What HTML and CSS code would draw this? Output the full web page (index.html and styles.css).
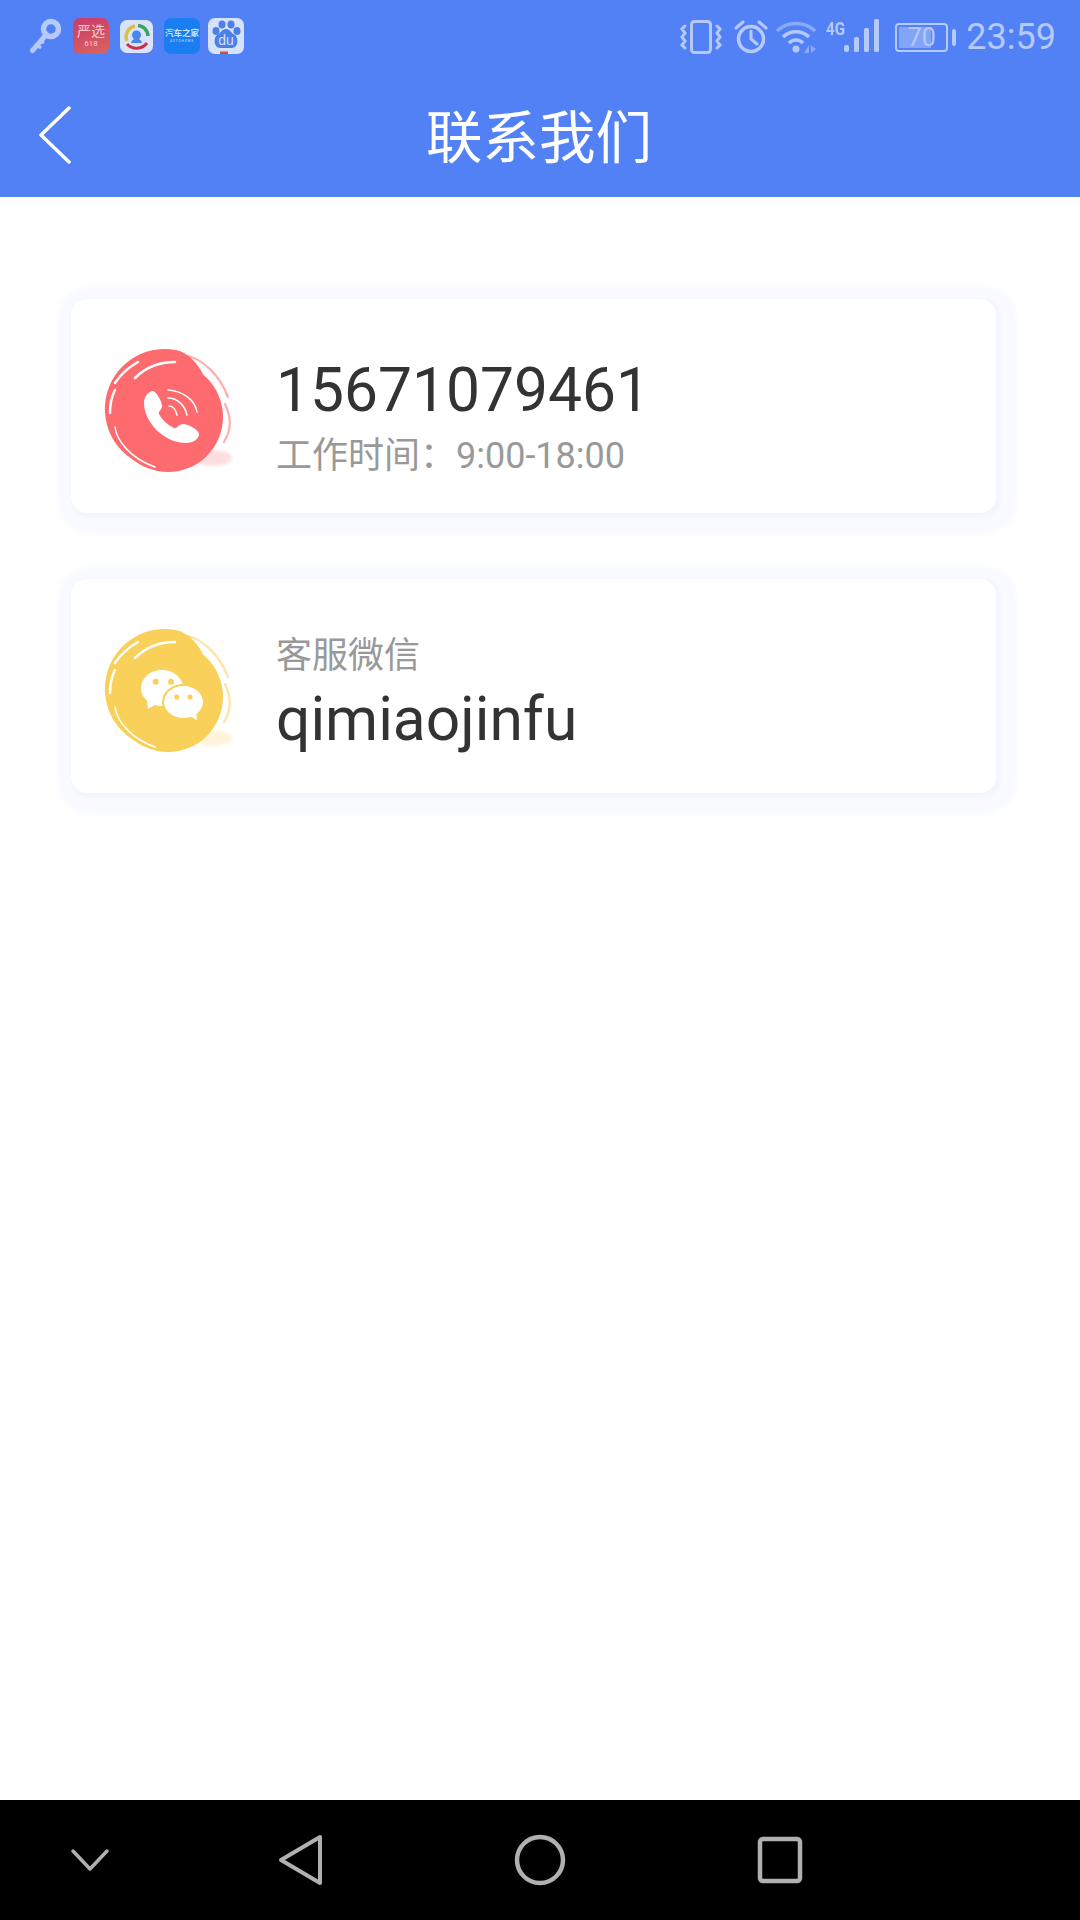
FILE: index.html
```html
<!DOCTYPE html>
<html lang="zh-CN">
<head>
  <meta charset="UTF-8">
  <title>联系我们</title>
  <link rel="stylesheet" href="styles.css">
</head>
<body>
  <div class="screen">
    <header class="top">
      <div class="status">
        <div class="status-left">
          <svg class="key" viewBox="0 0 32 36"><circle cx="21" cy="11" r="7.500" fill="none" stroke="currentColor" stroke-width="5.500"/><path d="M16 17 2.500 32.500" stroke="currentColor" stroke-width="5" stroke-linecap="round"/><path d="M7 27l4 3M11 23l3 2" stroke="currentColor" stroke-width="3"/></svg>
          <div class="app app-yanxuan"><span class="yx-name">严选</span><span class="yx-num">618</span></div>
          <div class="app app-news">
            <svg viewBox="0 0 33 33"><path d="M7 21A11 11 0 0 1 15 6" fill="none" stroke="#d9c23c" stroke-width="3.500"/><path d="M18 5.500A11 11 0 0 1 28 16" fill="none" stroke="#3aa45a" stroke-width="3.500"/><path d="M7 24A13 13 0 0 0 27 23" fill="none" stroke="#c9304a" stroke-width="3"/><circle cx="16.500" cy="15" r="4.500" fill="#4a86e8"/><path d="M11 23c1-6 10-6 11 0z" fill="#4a86e8"/></svg>
          </div>
          <div class="app app-autohome"><span class="ah-name">汽车之家</span><span class="ah-sub">AUTOHOME</span></div>
          <div class="app app-baidu">
            <svg viewBox="0 0 36 36"><ellipse cx="8" cy="13" rx="3.500" ry="4" fill="#4c7fe8"/><ellipse cx="14" cy="6.500" rx="3.500" ry="4" fill="#4c7fe8"/><ellipse cx="23" cy="6.500" rx="3.500" ry="4" fill="#4c7fe8"/><ellipse cx="29" cy="13" rx="3.500" ry="4" fill="#4c7fe8"/><path d="M18 11c4 0 5 4 9 6 4 3 3 13-3 13H12c-6 0-7-10-3-13 4-2 5-6 9-6z" fill="#4c7fe8"/><text x="18" y="27" class="du">du</text><rect x="12" y="33.500" width="8" height="2.500" fill="#e0483e"/></svg>
          </div>
        </div>
        <div class="status-right">
          <svg class="ico-vibrate" viewBox="0 0 42 34"><rect x="11.500" y="1.500" width="19" height="31" rx="3" fill="none" stroke="currentColor" stroke-width="3"/><path d="M5 6 2 9l3 4-3 4 3 4-3 4 3 3M37 6l3 3-3 4 3 4-3 4 3 4-3 3" fill="none" stroke="currentColor" stroke-width="3" stroke-linecap="round"/></svg>
          <svg class="ico-alarm" viewBox="0 0 34 34"><circle cx="17" cy="19" r="12.500" fill="none" stroke="currentColor" stroke-width="3.500"/><path d="M17 11v8l6 5M2 8l7-6M32 8l-7-6" fill="none" stroke="currentColor" stroke-width="3" stroke-linecap="round"/></svg>
          <svg class="ico-wifi" viewBox="0 0 40 34"><path d="M1 11C11 1 29 1 39 11" fill="none" stroke="#8aa9f8" stroke-width="3.500"/><path d="M7 17C14 10 26 10 33 17M13 23c4-4 10-4 14 0" fill="none" stroke="currentColor" stroke-width="3.500"/><circle cx="20" cy="29" r="3.500" fill="currentColor"/><path d="M33 25v8h-5zM35 25l5 4-5 4z" fill="#8aa9f8"/></svg>
          <div class="signal">
            <span class="net">4G</span>
            <svg viewBox="0 0 36 34"><rect x="0" y="26" width="5" height="7" rx="2" fill="currentColor"/><rect x="10" y="18" width="5" height="15" rx="1.500" fill="currentColor"/><rect x="20" y="9" width="5" height="24" rx="1.500" fill="currentColor"/><rect x="30" y="0" width="5" height="33" rx="1.500" fill="currentColor"/></svg>
          </div>
          <div class="battery">
            <div class="battery-box"><div class="battery-fill" style="width:70%"></div><span class="battery-num">70</span></div>
            <div class="battery-tip"></div>
          </div>
          <span class="clock">23:59</span>
        </div>
      </div>
      <div class="titlebar">
        <svg class="back" viewBox="0 0 34 58"><path d="M31 2 3 29l28 27" fill="none" stroke="#fff" stroke-width="3.500" stroke-linecap="round" stroke-linejoin="round"/></svg>
        <h1 class="title">联系我们</h1>
      </div>
    </header>

    <main class="content">
      <section class="card">
        <svg class="badge badge-red" viewBox="0 0 134 130">
          <use href="#brush"/>
          <path d="M44 57C44 50 49 45 53 45 57 46 62 56 62 60 62 64 58 65 59 68 62 74 69 80 74 82 77 83 79 78 83 78 88 78 99 84 99 88 99 93 93 97 86 97 64 97 44 76 44 57z" fill="#fff"/>
          <path d="M68 44c15 1 27 10 29 22M68 52c10 0 17 8 19 17M69 60c4 0 7 4 8 9" fill="none" stroke="#fff" stroke-width="1.500" stroke-linecap="round"/>
        </svg>
        <div class="info info-phone">
          <div class="big">15671079461</div>
          <div class="small small-after">工作时间：9:00-18:00</div>
        </div>
      </section>

      <section class="card">
        <svg class="badge badge-yellow" viewBox="0 0 134 130">
          <use href="#brush"/>
          <ellipse cx="62" cy="62" rx="21" ry="18" fill="#fff"/>
          <path d="M47 74 48 83 58 77z" fill="#fff"/>
          <circle cx="55.700" cy="55.700" r="3" fill="#f8d05a"/><circle cx="71" cy="55.700" r="3" fill="#f8d05a"/>
          <ellipse cx="83.500" cy="76" rx="21.500" ry="18" fill="#f8d05a"/>
          <ellipse cx="83.500" cy="76" rx="19.500" ry="16" fill="#fff"/>
          <path d="M88 89 97 94 96 84z" fill="#fff"/>
          <circle cx="76.700" cy="71" r="2.500" fill="#f8d05a"/><circle cx="90" cy="71" r="2.500" fill="#f8d05a"/>
        </svg>
        <div class="info info-wechat">
          <div class="small small-before">客服微信</div>
          <div class="big">qimiaojinfu</div>
        </div>
      </section>
    </main>

    <nav class="navbar">
      <svg class="nav-ico nav-hide" viewBox="0 0 120 60"><path d="M43 21 60 39 77 21" fill="none" stroke="#b0b0b0" stroke-width="3.500" stroke-linecap="round" stroke-linejoin="round"/></svg>
      <svg class="nav-ico nav-back" viewBox="0 0 120 60"><path d="M41 30 80 7V53z" fill="none" stroke="#b0b0b0" stroke-width="4" stroke-linejoin="round"/></svg>
      <svg class="nav-ico nav-home" viewBox="0 0 120 60"><circle cx="60" cy="30" r="23" fill="none" stroke="#b0b0b0" stroke-width="4.500"/></svg>
      <svg class="nav-ico" viewBox="0 0 120 60"><rect x="40" y="9" width="40" height="42" rx="3" fill="none" stroke="#b0b0b0" stroke-width="4.500"/></svg>
    </nav>
  </div>

  <svg class="defs" width="0" height="0">
    <defs>
      <filter id="soft"><feGaussianBlur stdDeviation="1.500"/></filter>
      <g id="brush">
        <ellipse cx="112" cy="112" rx="20" ry="8" fill="currentColor" opacity=".22" filter="url(#soft)"/>
        <circle cx="68" cy="71" r="55" fill="currentColor"/>
        <path d="M35 115A60 60 0 0 1 76 4C86 6 96 14 104 30L68 71z" fill="currentColor"/>
        <path d="M35 32C46 21 60 16 75 16M15 37C21 28 29 21 38 16M10 67C10 58 12 50 15 44" fill="none" stroke="#fff" stroke-width="2.500" stroke-linecap="round"/>
        <path d="M15 81C17 95 30 112 55 121" fill="none" stroke="#fff" stroke-width="1.500" stroke-linecap="round"/>
        <path d="M88 10C104 14 120 30 128 51M125 58C132 73 131 84 124 96" fill="none" stroke="currentColor" stroke-width="2.200" opacity=".55" stroke-linecap="round"/>
      </g>
    </defs>
  </svg>
</body>
</html>
```

FILE: styles.css
```css
* {
  box-sizing: border-box;
}
body {
  margin: 0;
  background: #fff;
  font-family: Roboto, "Noto Sans CJK SC", sans-serif;
}
.screen {
  width: 1080px;
  height: 1920px;
  display: flex;
  flex-direction: column;
  overflow: hidden;
}
.defs {
  display: block;
}

/* top area */
.top {
  height: 197px;
  background: #5280f5;
  color: #b5cafb;
}
.status {
  height: 72px;
  padding: 18px 24px 0 30px;
  display: flex;
  justify-content: space-between;
}
.status-left {
  display: flex;
  gap: 11px;
}
.status-right {
  display: flex;
  align-items: flex-start;
}
.key {
  width: 32px;
  height: 36px;
}
.app {
  width: 36px;
  height: 36px;
  border-radius: 7px;
  overflow: hidden;
  display: flex;
  flex-direction: column;
  align-items: center;
  justify-content: center;
}
.app svg {
  display: block;
  width: 100%;
  height: 100%;
}
.app-yanxuan {
  background: linear-gradient(160deg, #c93a6b, #d9655c);
  color: #f6c9d2;
}
.yx-name {
  font-size: 14px;
  line-height: 16px;
}
.yx-num {
  font-size: 8px;
  line-height: 10px;
}
.app-news {
  width: 33px;
  height: 33px;
  margin-top: 2px;
  background: #d9e3fb;
}
.app-autohome {
  background: #1a7df0;
  color: #cfe3ff;
}
.ah-name {
  font-size: 8.500px;
  font-weight: 700;
  line-height: 11px;
}
.ah-sub {
  font-size: 3px;
  line-height: 5px;
  letter-spacing: 1px;
}
.app-baidu {
  margin-left: -3px;
  background: #d6e1fb;
}
.du {
  font-family: "Liberation Sans", sans-serif;
  font-size: 14px;
  fill: #d6e1fb;
  text-anchor: middle;
}
.ico-vibrate {
  width: 42px;
  height: 34px;
  margin-top: 2px;
}
.ico-alarm {
  width: 34px;
  height: 34px;
  margin: 2px 0 0 12px;
}
.ico-wifi {
  width: 40px;
  height: 34px;
  margin: 2px 0 0 8px;
}
.signal {
  position: relative;
  width: 53px;
  height: 34px;
  margin: 1px 0 0 10px;
}
.signal svg {
  position: absolute;
  right: -1px;
  bottom: 0;
  width: 36px;
  height: 34px;
}
.net {
  position: absolute;
  left: 0;
  top: -2px;
  font-size: 19px;
  font-weight: 700;
  transform: scaleX(.8);
  transform-origin: left top;
}
.battery {
  display: flex;
  align-items: center;
  height: 30px;
  margin: 4px 0 0 16px;
}
.battery-box {
  position: relative;
  width: 53px;
  height: 29px;
  border: 2px solid currentColor;
  border-radius: 4px;
  padding: 2px;
}
.battery-fill {
  height: 100%;
  background: #83a4f8;
}
.battery-num {
  position: absolute;
  left: 0;
  right: 0;
  top: 0;
  text-align: center;
  font-size: 25px;
  line-height: 25px;
}
.battery-tip {
  width: 4px;
  height: 17px;
  margin-left: 4px;
  background: currentColor;
  border-radius: 2px;
}
.clock {
  margin-left: 10px;
  font-size: 36px;
  line-height: 38px;
}
.titlebar {
  position: relative;
  height: 125px;
  padding: 9px 2px 0 0;
  display: flex;
  justify-content: center;
  align-items: center;
}
.back {
  position: absolute;
  left: 38px;
  top: 34px;
  width: 34px;
  height: 58px;
}
.title {
  margin: 0;
  color: #fff;
  font-size: 56.500px;
  font-weight: 400;
  line-height: 80px;
}

/* cards */
.content {
  flex: 1;
  padding: 102px 84px 0 71px;
  display: flex;
  flex-direction: column;
  gap: 66px;
}
.card {
  height: 214px;
  padding-left: 29px;
  background: #fff;
  border-radius: 16px;
  display: flex;
  align-items: center;
  box-shadow: 2px 2px 2px 3px #f3f6fe, 4px 4px 6px 17px #f9faff;
}
.badge {
  width: 134px;
  height: 130px;
  flex: none;
  margin-top: 10px;
}
.badge-red {
  color: #fd6b6e;
}
.badge-yellow {
  color: #f8d05a;
}
.info {
  margin-left: 42px;
}
.info-phone {
  padding-top: 22px;
}
.info-wechat {
  padding-top: 16px;
}
.big {
  color: #333;
  font-size: 60.500px;
  line-height: 70px;
}
.small {
  color: #999;
  font-size: 36px;
  line-height: 44px;
}
.small-after {
  margin-top: 8px;
}
.small-before {
  margin-bottom: 7px;
}

/* bottom bar */
.navbar {
  height: 120px;
  background: #000;
  padding: 30px 0 30px 30px;
  display: flex;
}
.nav-ico {
  width: 120px;
  height: 60px;
}
.nav-hide {
  margin-right: 90px;
}
.nav-back {
  margin-right: 120px;
}
.nav-home {
  margin-right: 120px;
}
```
